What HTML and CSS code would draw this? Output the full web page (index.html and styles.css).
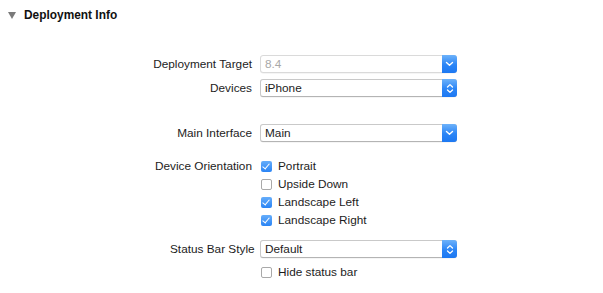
FILE: index.html
```html
<!DOCTYPE html>
<html lang="en">
<head>
    <meta charset="UTF-8">
    <title>Deployment Info</title>
    <link rel="stylesheet" href="styles.css">
</head>
<body>
    <div class="panel">
        <header class="section-head">
            <span class="disclosure"></span>
            <h1>Deployment Info</h1>
        </header>

        <div class="form">
            <div class="row">
                <label>Deployment Target</label>
                <div class="popup disabled">
                    <span class="value">8.4</span>
                    <span class="btn">
                        <svg width="9" height="6" viewBox="0 0 9 6"><path d="M1.5 1.5 L4.5 4.3 L7.5 1.5" fill="none" stroke="#fff" stroke-width="1.4" stroke-linecap="round" stroke-linejoin="round"/></svg>
                    </span>
                </div>
            </div>
            <div class="row gap-s">
                <label>Devices</label>
                <div class="popup">
                    <span class="value">iPhone</span>
                    <span class="btn">
                        <svg width="8" height="11" viewBox="0 0 8 11"><path d="M1.5 4 L4 1.6 L6.5 4 M1.5 7 L4 9.4 L6.5 7" fill="none" stroke="#fff" stroke-width="1.3" stroke-linecap="round" stroke-linejoin="round"/></svg>
                    </span>
                </div>
            </div>

            <div class="row gap-l">
                <label>Main Interface</label>
                <div class="popup">
                    <span class="value">Main</span>
                    <span class="btn">
                        <svg width="9" height="6" viewBox="0 0 9 6"><path d="M1.5 1.5 L4.5 4.3 L7.5 1.5" fill="none" stroke="#fff" stroke-width="1.4" stroke-linecap="round" stroke-linejoin="round"/></svg>
                    </span>
                </div>
            </div>

            <div class="row gap-m">
                <label>Device Orientation</label>
                <div class="check"><span class="box on"></span>Portrait</div>
            </div>
            <div class="row">
                <span></span>
                <div class="check"><span class="box"></span>Upside Down</div>
            </div>
            <div class="row">
                <span></span>
                <div class="check"><span class="box on"></span>Landscape Left</div>
            </div>
            <div class="row">
                <span></span>
                <div class="check"><span class="box on"></span>Landscape Right</div>
            </div>

            <div class="row gap-sb">
                <label class="clip">Status Bar Style</label>
                <div class="popup">
                    <span class="value">Default</span>
                    <span class="btn">
                        <svg width="8" height="11" viewBox="0 0 8 11"><path d="M1.5 4 L4 1.6 L6.5 4 M1.5 7 L4 9.4 L6.5 7" fill="none" stroke="#fff" stroke-width="1.3" stroke-linecap="round" stroke-linejoin="round"/></svg>
                    </span>
                </div>
            </div>
            <div class="row gap-hide">
                <span></span>
                <div class="check"><span class="box"></span>Hide status bar</div>
            </div>
        </div>
    </div>
</body>
</html>
```

FILE: styles.css
```css
body {
    margin: 0;
    background: #ffffff;
    font-family: 'Liberation Sans', Arial, sans-serif;
    font-size: 11.8px;
    color: #1c1c1c;
}
.panel {
    width: 603px;
    height: 293px;
}
.section-head {
    height: 30px;
    display: flex;
    align-items: center;
    padding-left: 8px;
}
.disclosure {
    width: 0;
    height: 0;
    border-left: 4.5px solid transparent;
    border-right: 4.5px solid transparent;
    border-top: 7px solid #7a7a7a;
    margin-right: 8px;
}
h1 {
    margin: 0;
    font-size: 11.9px;
    font-weight: bold;
    color: #111;
}
.form {
    padding-top: 25px;
    padding-left: 8px;
}
.row {
    display: grid;
    grid-template-columns: 244px 197px;
    column-gap: 8px;
    align-items: center;
    height: 18px;
}
.row label {
    text-align: right;
    white-space: nowrap;
}
.row label.clip {
    overflow: hidden;
    text-align: left;
    padding-left: 162px;
    margin-right: -3px;
}
.gap-s { margin-top: 6px; }
.gap-l { margin-top: 27px; }
.gap-m { margin-top: 15px; }
.gap-sb { margin-top: 11px; }
.gap-hide { margin-top: 5px; }
.popup {
    height: 18px;
    box-sizing: border-box;
    border: 1px solid #c9c9c9;
    border-bottom-color: #b4b4b4;
    border-radius: 3px;
    background: #fff;
    display: flex;
    align-items: center;
    box-shadow: 0 0.5px 0.5px rgba(0, 0, 0, 0.08);
}
.popup .value {
    flex: 1;
    padding-left: 4px;
}
.popup.disabled {
    border-color: #dadada;
}
.popup.disabled .value {
    color: #a8a8a8;
}
.btn {
    width: 15px;
    height: 18px;
    margin: -1px -1px -1px 0;
    border-radius: 0 3px 3px 0;
    background: linear-gradient(#6db2fa, #2b85f6 55%, #1d78f2);
    display: flex;
    align-items: center;
    justify-content: center;
}
.check {
    display: flex;
    align-items: center;
    padding-left: 1px;
}
.box {
    width: 11px;
    height: 11px;
    box-sizing: border-box;
    border: 1px solid #a9a9a9;
    border-radius: 2px;
    background: #fff;
    margin-right: 6px;
    position: relative;
}
.box.on {
    border: none;
    background: linear-gradient(#65adfa, #2a84f5);
}
.box.on::after {
    content: '';
    position: absolute;
    left: 3px;
    top: 1px;
    width: 3px;
    height: 6px;
    border-right: 1.5px solid #fff;
    border-bottom: 1.5px solid #fff;
    transform: rotate(40deg);
}
```
